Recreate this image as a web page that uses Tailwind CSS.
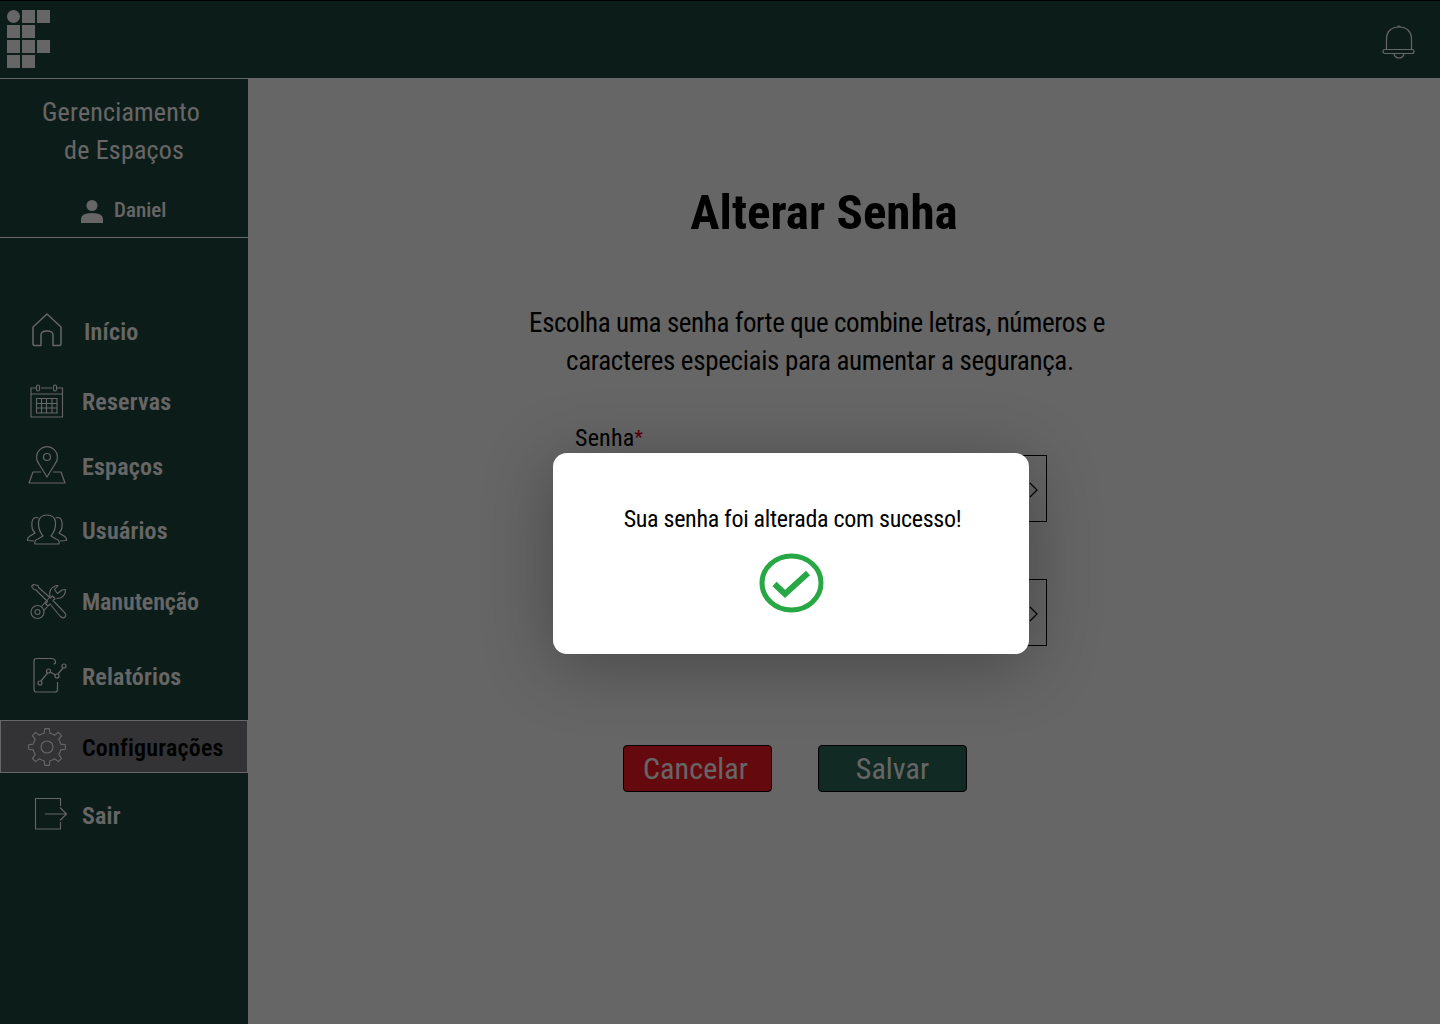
<!DOCTYPE html>
<html lang="pt-BR">
<head>
    <meta charset="UTF-8">
    <meta name="viewport" content="width=device-width, initial-scale=1.0">
    <title>Alterar Senha</title>
    <script src="https://cdn.jsdelivr.net/npm/@tailwindcss/browser@4"></script>
</head>
<body class="relative h-[1024px] w-[1440px] overflow-hidden bg-white font-['Roboto',sans-serif] [font-stretch:75%]">
    <!-- topo -->
    <header class="flex h-[79px] items-start justify-between border-t border-b border-t-black border-b-white bg-[#20463e] pl-[7px] pr-[24px]">
        <div class="mt-[9px] grid grid-cols-[13px_13px_13px] grid-rows-[13px_13px_13px_13px] gap-[2px]">
            <div class="rounded-full bg-white"></div><div class="bg-white"></div><div class="bg-white"></div>
            <div class="bg-white"></div><div class="bg-white"></div><div></div>
            <div class="bg-white"></div><div class="bg-white"></div><div class="bg-white"></div>
            <div class="bg-white"></div><div class="bg-white"></div><div></div>
        </div>
        <svg class="mt-[24px] h-[36px] w-[34px] text-white" viewBox="0 0 34 36" fill="none" stroke="currentColor" stroke-width="1.2">
            <path d="M4.5 24 V14 C4.5 6 10 2 17 2 C24 2 29.5 6 29.5 14 V24"/>
            <path d="M15.5 2 Q17 0 18.500 2"/>
            <rect x="1" y="24.500" width="31" height="4" rx="2"/>
            <path d="M12 29 Q13 33 17 33 Q21 33 22 29"/>
        </svg>
    </header>

    <div class="flex h-[945px]">
        <!-- menu lateral -->
        <aside class="w-[248px] shrink-0 bg-[#20463e] text-white">
            <div class="h-[159px] border-b border-white">
                <h2 class="pr-[6px] pt-[14px] text-center text-[26px] leading-[38px] tracking-[0.2px] text-white">Gerenciamento<br>&nbsp;de Espaços</h2>
                <div class="mt-[27px] flex h-[30px] items-center pl-[81px]">
                    <svg class="h-[24px] w-[22px]" viewBox="0 0 22 24" fill="currentColor"><circle cx="11" cy="6.500" r="5.500"/><path d="M0 24 V20 Q0 14 11 14 Q22 14 22 20 V24 Z"/></svg>
                    <span class="ml-[11px] text-[21px] font-medium">Daniel</span>
                </div>
            </div>
            <nav class="pt-[59px] text-[24px] font-semibold tracking-[0.2px]">
                <a class="flex h-[70px] items-center">
                    <svg class="h-[44px] w-[84px] shrink-0" viewBox="0 0 84 44" fill="none" stroke="currentColor" stroke-width="1.500" stroke-linejoin="round"><path d="M33 17 L47 4 L61 17 V34 Q61 35.500 59.500 35.500 H53 V25 Q53 21 47 21 Q41 21 41 25 V35.500 H34.500 Q33 35.500 33 34 Z"/></svg>
                    <span>Início</span>
                </a>
                <a class="flex h-[68px] items-center">
                    <svg class="h-[44px] w-[82px] shrink-0" viewBox="0 0 82 44" fill="none" stroke="currentColor" stroke-width="1.100"><path d="M36 9 H31 V38 H62.500 V9 H57 M41 9 H52 M31 15 H62.500"/><rect x="36.500" y="6" width="3" height="6" rx="1.500"/><rect x="53.500" y="6" width="3" height="6" rx="1.500"/><path d="M36.500 19.500 H57 V34 H36.500 Z M36.500 24.500 H57 M36.500 29 H57 M41.500 19.500 V34 M46.500 19.500 V34 M52 19.500 V34"/></svg>
                    <span class="pt-[2px]">Reservas</span>
                </a>
                <a class="flex h-[64px] items-center">
                    <svg class="h-[44px] w-[82px] shrink-0" viewBox="0 0 82 44" fill="none" stroke="currentColor" stroke-width="1.200" stroke-linejoin="round"><path d="M47 32 L39 19 A10.500 10.500 0 1 1 55 19 Z"/><circle cx="47" cy="12" r="3.500"/><path d="M41 27 H33 L29 38 H65 L61 27 H53"/></svg>
                    <span>Espaços</span>
                </a>
                <a class="flex h-[64px] items-center">
                    <svg class="h-[44px] w-[82px] shrink-0" viewBox="0 0 82 44" fill="none" stroke="currentColor" stroke-width="1.200" stroke-linejoin="round"><path d="M35 35 Q34 31 38 30 L43 27 Q38 21 38.500 13 Q39.500 6 47 6 Q54.500 6 55.500 13 Q56 21 51 27 L56 30 Q60 31 59 35 Z"/><path d="M38.500 9 Q33 7 32 13 Q31 20 35 24 L30 27 Q27 29 27.500 31.500 L34 32"/><path d="M55.500 9 Q61 7 62 13 Q63 20 59 24 L64 27 Q67 29 66.500 31.500 L60 32"/></svg>
                    <span>Usuários</span>
                </a>
                <a class="flex h-[78px] items-center">
                    <svg class="h-[44px] w-[82px] shrink-0" viewBox="0 0 82 44" fill="none" stroke="currentColor" stroke-width="1.100" stroke-linejoin="round"><path d="M33.500 4.500 L31.500 6.500 L34 9.500 L36 10 L47.500 21.500 L45.500 23.500 L48 26 L50 24 L60 36 Q63 39 65 37 Q67 35 64 32 L53 20.500 L55 18.500 L52.500 16 L50.500 18 L38.500 7.500 L38 5.500 Z"/><path d="M50 17 Q48 9 55 6 L58 5.500 L54.500 9.500 L57.500 13.500 L62 10 L65.500 9.500 Q65.500 16 60 18 L56.500 18.500 M50 17 L41.500 26.500 M43.500 31 L47.500 26.500"/><circle cx="37.500" cy="32" r="6.500"/><circle cx="37.500" cy="32" r="2.500"/></svg>
                    <span class="tracking-[-0.1px]">Manutenção</span>
                </a>
                <a class="flex h-[72px] items-center">
                    <svg class="h-[44px] w-[82px] shrink-0" viewBox="0 0 82 44" fill="none" stroke="currentColor" stroke-width="1.200" stroke-linejoin="round"><path d="M51 3.500 H36.500 Q34 3.500 34 6 V34.500 Q34 37 36.500 37 H55 Q57.500 37 57.500 34.500 V27 M51 3.500 Q55.500 3.500 55.500 7 Q55.500 9 53.500 9"/><circle cx="40" cy="28" r="2"/><circle cx="48.500" cy="16" r="2"/><circle cx="57" cy="21" r="2"/><circle cx="64" cy="11" r="2"/><path d="M41 26 L47.500 18 M50.300 17 L55.300 20 M58 19 L63 13"/></svg>
                    <span>Relatórios</span>
                </a>
                <a class="mt-[7px] flex h-[53px] items-center border border-white bg-[#808085] text-black">
                    <svg class="ml-[-1px] h-[44px] w-[82px] shrink-0 text-white" viewBox="0 0 82 44" fill="none" stroke="currentColor" stroke-width="1.100" stroke-linejoin="round"><g transform="translate(47 22)"><path d="M-5.360 -12.930 L-2.910 -13.690 L-2.250 -18.360 H2.250 L2.910 -13.690 L5.360 -12.930"/><path transform="rotate(45)" d="M-5.360 -12.930 L-2.910 -13.690 L-2.250 -18.360 H2.250 L2.910 -13.690 L5.360 -12.930"/><path transform="rotate(90)" d="M-5.360 -12.930 L-2.910 -13.690 L-2.250 -18.360 H2.250 L2.910 -13.690 L5.360 -12.930"/><path transform="rotate(135)" d="M-5.360 -12.930 L-2.910 -13.690 L-2.250 -18.360 H2.250 L2.910 -13.690 L5.360 -12.930"/><path transform="rotate(180)" d="M-5.360 -12.930 L-2.910 -13.690 L-2.250 -18.360 H2.250 L2.910 -13.690 L5.360 -12.930"/><path transform="rotate(225)" d="M-5.360 -12.930 L-2.910 -13.690 L-2.250 -18.360 H2.250 L2.910 -13.690 L5.360 -12.930"/><path transform="rotate(270)" d="M-5.360 -12.930 L-2.910 -13.690 L-2.250 -18.360 H2.250 L2.910 -13.690 L5.360 -12.930"/><path transform="rotate(315)" d="M-5.360 -12.930 L-2.910 -13.690 L-2.250 -18.360 H2.250 L2.910 -13.690 L5.360 -12.930"/><circle r="6"/></g></svg>
                    <span class="pt-[2px]">Configurações</span>
                </a>
                <a class="mt-[17px] flex h-[52px] items-center">
                    <svg class="h-[44px] w-[82px] shrink-0" viewBox="0 0 82 44" fill="none" stroke="currentColor" stroke-width="1.100" stroke-linejoin="round"><path d="M60.500 12 V4.500 H35.500 V35 H60.500 V28 M45 20 H66.500 M60 13.500 L66.500 20 L60 26.500"/></svg>
                    <span>Sair</span>
                </a>
            </nav>
        </aside>

        <!-- conteudo -->
        <main class="flex-1 pt-[100px] text-black">
            <h1 class="h-[66px] pr-[40px] text-center text-[49px] font-bold leading-[68px]">Alterar Senha</h1>
            <p class="mt-[59px] pr-[54px] text-center text-[27px] leading-[38px] tracking-[-0.4px]">Escolha uma senha forte que combine letras, números e<br><span class="tracking-[-0.32px]">&nbsp;caracteres especiais para aumentar a segurança.</span></p>
            <form class="ml-[327px] mt-[43px] w-[472px]">
                <label class="block h-[32px] text-[24px] leading-[28px] tracking-[0.2px]">Senha<span class="align-[3px] text-[18px] font-bold text-red-600">*</span></label>
                <div class="flex h-[67px] items-center justify-end border border-black pr-[8px]">
                    <svg class="mt-[3px] h-[16px] w-[9px]" viewBox="0 0 9 16" fill="none" stroke="black" stroke-width="1.200"><path d="M1 1 L8 8 L1 15"/></svg>
                </div>
                <label class="mt-[25px] block h-[32px] text-[24px] leading-[28px] tracking-[0.2px]">Confirmar Senha<span class="align-[3px] text-[18px] font-bold text-red-600">*</span></label>
                <div class="flex h-[67px] items-center justify-end border border-black pr-[8px]">
                    <svg class="mt-[3px] h-[16px] w-[9px]" viewBox="0 0 9 16" fill="none" stroke="black" stroke-width="1.200"><path d="M1 1 L8 8 L1 15"/></svg>
                </div>
                <div class="ml-[48px] mt-[99px] flex gap-[46px]">
                    <button type="button" class="h-[47px] w-[149px] rounded-[4px] border border-black bg-[#fa1923] pr-[4px] text-[30px] tracking-[0.1px] text-white">Cancelar</button>
                    <button type="button" class="h-[47px] w-[149px] rounded-[4px] border border-black bg-[#2d695a] text-[30px] tracking-[0.1px] text-white">Salvar</button>
                </div>
            </form>
        </main>
    </div>

    <!-- modal de sucesso -->
    <div class="absolute inset-0 bg-black/60">
        <div class="absolute left-[553px] top-[453px] flex h-[201px] w-[476px] flex-col items-center rounded-[14px] bg-white shadow-[0_10px_70px_rgba(0,0,0,0.3)]">
            <p class="ml-[3px] mt-[50px] text-[24px] leading-[33px] tracking-[-0.3px] text-black">Sua senha foi alterada com sucesso!</p>
            <svg class="ml-[1px] mt-[17px] h-[60px] w-[65px]" viewBox="0 0 65 60" fill="none" stroke="#28a745">
                <ellipse cx="32.500" cy="30" rx="29.500" ry="27" stroke-width="5"/>
                <path d="M15.500 31 L26 41 L49 20" stroke-width="6"/>
            </svg>
        </div>
    </div>
</body>
</html>
